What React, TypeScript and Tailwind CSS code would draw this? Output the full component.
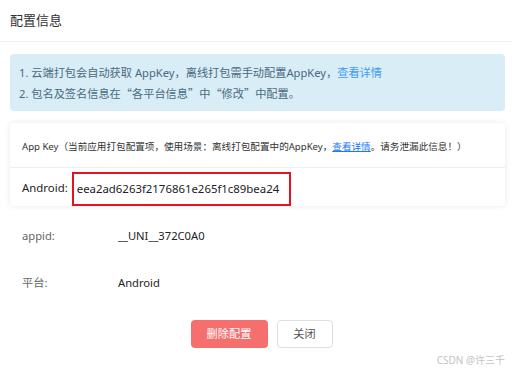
const font = { fontFamily: '"Noto Sans", "Noto Sans CJK SC", sans-serif' };

const Q = ({ c }: { c: string }) => (
  <span style={{ fontFamily: '"Noto Sans CJK SC", sans-serif' }}>{c}</span>
);

const App = () => {
  return (
    <div className="relative w-[512px] h-[374px] bg-white overflow-hidden" style={font}>
      <div className="h-[42px] flex items-center px-[10px] border-b border-[#f2f2f2]">
        <h2 className="text-[13px] text-[#303133]">配置信息</h2>
      </div>

      <div className="px-[10px] pr-[7px]">
        <div className="mt-[12px] rounded-[4px] bg-[#d9edf7] pl-[9px] pt-[8px] pb-[7px] text-[11.2px] leading-[21px] text-[#4b6a80]">
          <p>
            1. 云端打包会自动获取 AppKey，离线打包需手动配置AppKey，
            <a className="text-[#3f9cf0]">查看详情</a>
          </p>
          <p>
            2. 包名及签名信息在<Q c="“" />各平台信息<Q c="”" />中<Q c="“" />修改<Q c="”" />中配置。
          </p>
        </div>

        <div className="mt-[12px] rounded-[4px] bg-white shadow-[0_0_6px_rgba(0,0,0,0.09)]">
          <div className="h-[44px] flex items-center pl-[12px] pt-[4px] text-[9.6px] text-[#333]">
            <span>
              App Key（当前应用打包配置项，使用场景：离线打包配置中的AppKey，
              <a className="text-[#1677ff] underline">查看详情</a>
              。请务泄漏此信息！）
            </span>
          </div>
          <div className="h-[39px] border-t border-[#eee] flex items-end pl-[12px] text-[11.4px] text-[#222]">
            <span className="mb-[10px]">Android:</span>
            <span className="ml-[4px] h-[34px] w-[219px] border-2 border-[#e3141f] flex items-center pl-[3px]">
              eea2ad6263f2176861e265f1c89bea24
            </span>
          </div>
        </div>

        <div className="mt-[7px] h-[47px] flex items-center pl-[12px] text-[11.2px]">
          <span className="w-[96px] text-[#666]">appid:</span>
          <span className="text-[#222]">__UNI__372C0A0</span>
        </div>
        <div className="h-[47px] flex items-center pl-[12px] text-[11.2px]">
          <span className="w-[96px] text-[#666]">平台:</span>
          <span className="text-[#222]">Android</span>
        </div>

        <div className="mt-[13px] flex justify-center gap-[9px] pl-[8px]">
          <button className="w-[77px] h-[28px] rounded-[4px] bg-[#f56f6f] text-white text-[11.2px]">
            删除配置
          </button>
          <button className="w-[56px] h-[28px] rounded-[4px] bg-white border border-[#dcdfe6] text-[#555] text-[11.2px]">
            关闭
          </button>
        </div>
      </div>

      <div className="absolute right-[7px] bottom-[6px] text-[10px] text-[#c4c4c4]">CSDN @许三千</div>
    </div>
  );
};

export default App;
